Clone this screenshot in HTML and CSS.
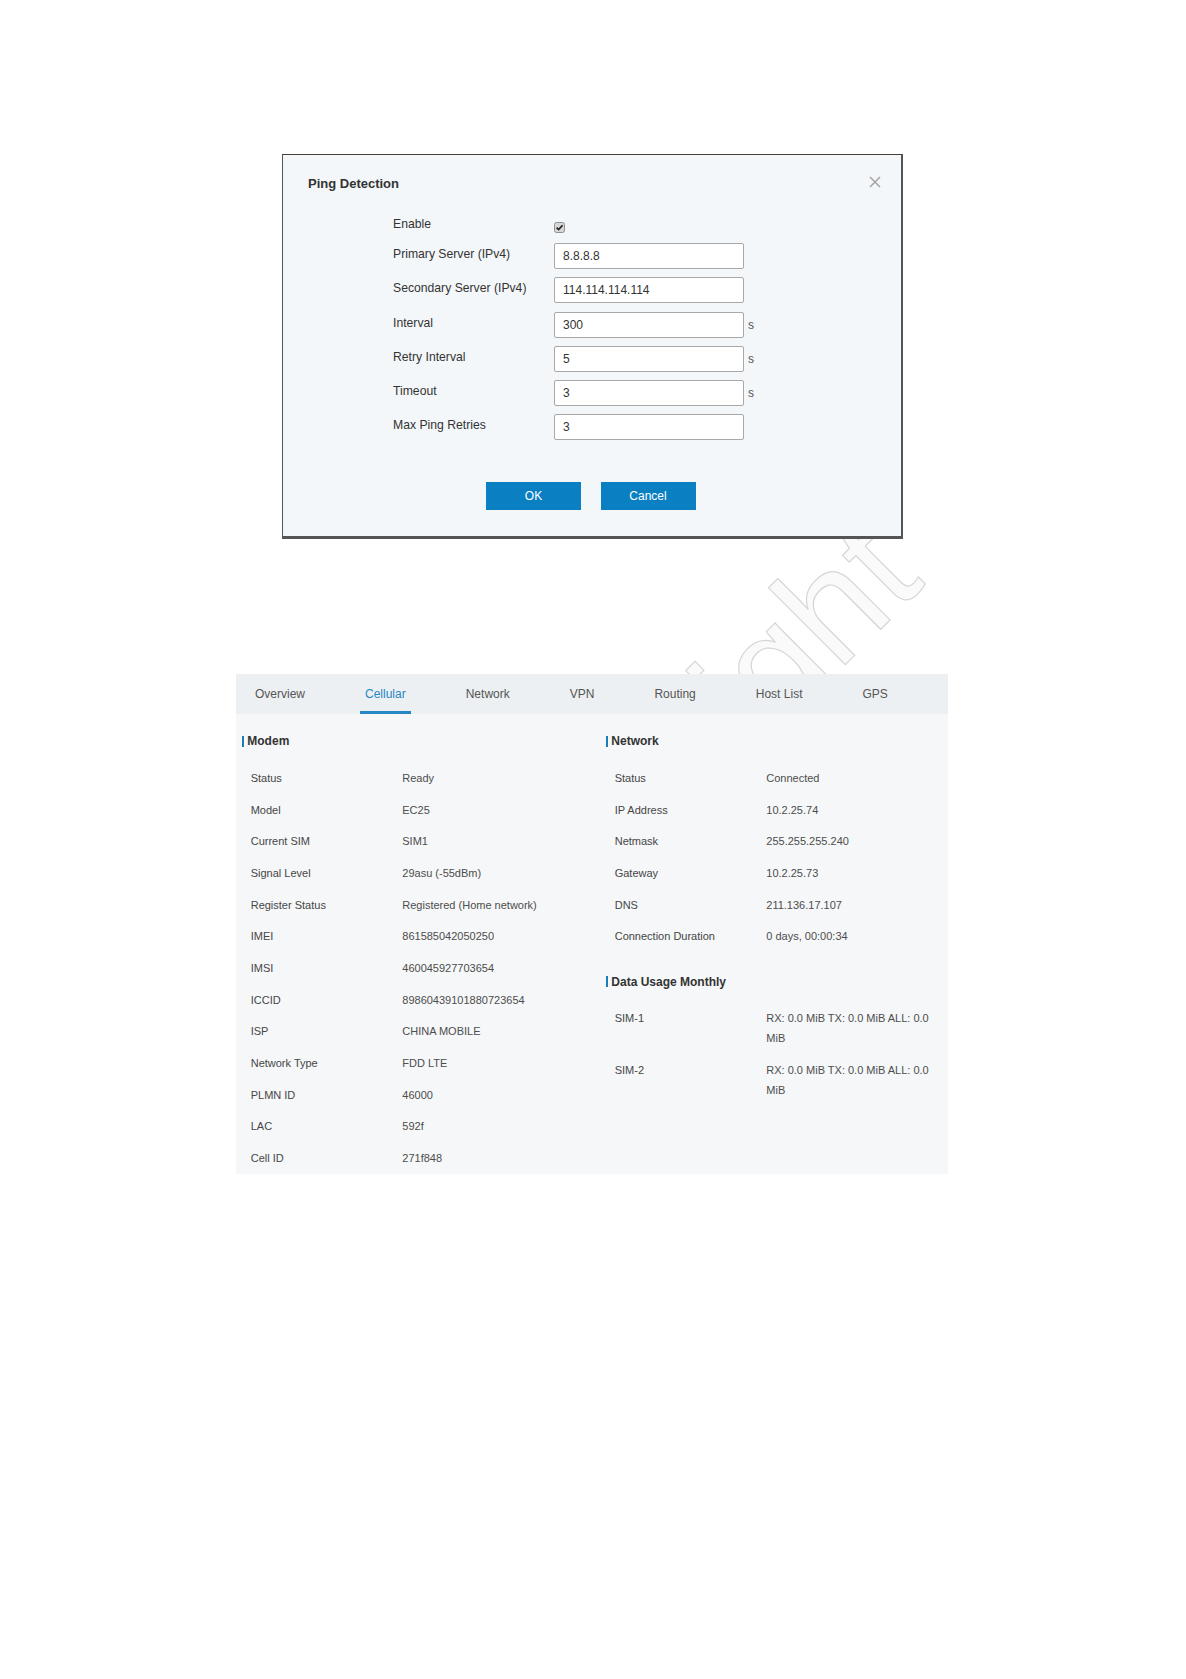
FILE: index.html
```html
<!DOCTYPE html>
<html>
<head>
    <title>Ping Detection - Cellular Status</title>
    <meta name="viewport" content="width=device-width, initial-scale=1.0">
    <link rel="stylesheet" href="styles.css">
</head>
<body>
<div class="page">
    <!-- faint watermark behind the screenshots -->
    <span class="watermark">Milesight</span>

    <!-- Ping Detection dialog -->
    <div class="dialog">
        <div class="dialog-head">
            <span class="dialog-title">Ping Detection</span>
            <svg class="close" width="12" height="12" viewBox="0 0 12 12">
                <path d="M1 1 L11 11 M11 1 L1 11" stroke="#a3a3a3" stroke-width="1.5" fill="none"/>
            </svg>
        </div>
        <div class="form">
            <div class="field">
                <label>Enable</label>
                <svg class="check" width="11" height="11" viewBox="0 0 11 11">
                    <rect x="0.5" y="0.5" width="10" height="10" rx="2" fill="#d6d6d6" stroke="#8f8f8f"/>
                    <path d="M2.6 5.6 L4.6 7.6 L8.6 3.2" stroke="#222" stroke-width="1.7" fill="none"/>
                </svg>
            </div>
            <div class="field">
                <label>Primary Server (IPv4)</label>
                <input type="text" value="8.8.8.8">
            </div>
            <div class="field">
                <label>Secondary Server (IPv4)</label>
                <input type="text" value="114.114.114.114">
            </div>
            <div class="field">
                <label>Interval</label>
                <input type="text" value="300">
                <span class="unit">s</span>
            </div>
            <div class="field">
                <label>Retry Interval</label>
                <input type="text" value="5">
                <span class="unit">s</span>
            </div>
            <div class="field">
                <label>Timeout</label>
                <input type="text" value="3">
                <span class="unit">s</span>
            </div>
            <div class="field">
                <label>Max Ping Retries</label>
                <input type="text" value="3">
            </div>
        </div>
        <div class="actions">
            <button>OK</button>
            <button>Cancel</button>
        </div>
    </div>

    <!-- Status > Cellular page -->
    <div class="status">
        <div class="tabs">
            <span class="tab">Overview</span>
            <span class="tab active">Cellular</span>
            <span class="tab">Network</span>
            <span class="tab">VPN</span>
            <span class="tab">Routing</span>
            <span class="tab">Host List</span>
            <span class="tab">GPS</span>
        </div>
        <div class="panel">
            <div class="col">
                <div class="section-title">Modem</div>
                <div class="row"><span class="k">Status</span><span class="v">Ready</span></div>
                <div class="row"><span class="k">Model</span><span class="v">EC25</span></div>
                <div class="row"><span class="k">Current SIM</span><span class="v">SIM1</span></div>
                <div class="row"><span class="k">Signal Level</span><span class="v">29asu (-55dBm)</span></div>
                <div class="row"><span class="k">Register Status</span><span class="v">Registered (Home network)</span></div>
                <div class="row"><span class="k">IMEI</span><span class="v">861585042050250</span></div>
                <div class="row"><span class="k">IMSI</span><span class="v">460045927703654</span></div>
                <div class="row"><span class="k">ICCID</span><span class="v">89860439101880723654</span></div>
                <div class="row"><span class="k">ISP</span><span class="v">CHINA MOBILE</span></div>
                <div class="row"><span class="k">Network Type</span><span class="v">FDD LTE</span></div>
                <div class="row"><span class="k">PLMN ID</span><span class="v">46000</span></div>
                <div class="row"><span class="k">LAC</span><span class="v">592f</span></div>
                <div class="row"><span class="k">Cell ID</span><span class="v">271f848</span></div>
            </div>
            <div class="col">
                <div class="section-title">Network</div>
                <div class="row"><span class="k">Status</span><span class="v">Connected</span></div>
                <div class="row"><span class="k">IP Address</span><span class="v">10.2.25.74</span></div>
                <div class="row"><span class="k">Netmask</span><span class="v">255.255.255.240</span></div>
                <div class="row"><span class="k">Gateway</span><span class="v">10.2.25.73</span></div>
                <div class="row"><span class="k">DNS</span><span class="v">211.136.17.107</span></div>
                <div class="row"><span class="k">Connection Duration</span><span class="v">0 days, 00:00:34</span></div>

                <div class="section-title usage">Data Usage Monthly</div>
                <div class="row"><span class="k">SIM-1</span><span class="v">RX: 0.0 MiB TX: 0.0 MiB ALL: 0.0 MiB</span></div>
                <div class="row"><span class="k">SIM-2</span><span class="v">RX: 0.0 MiB TX: 0.0 MiB ALL: 0.0 MiB</span></div>
            </div>
        </div>
    </div>
</div>
</body>
</html>
```

FILE: styles.css
```css
* {
    box-sizing: border-box;
}

body {
    margin: 0;
    background-color: #fff;
    font-family: "Liberation Sans", Arial, sans-serif;
    color: #333;
}

.page {
    position: relative;
    min-height: 1679px;
    padding-top: 154px;
    overflow: hidden;
}

/* Watermark sits under both screenshots */
.watermark {
    position: absolute;
    left: 508px;
    top: 875px;
    font-size: 150px;
    line-height: 1;
    white-space: nowrap;
    color: #fafafa;
    -webkit-text-stroke: 1.2px #d6d6d6;
    transform-origin: 0 127px;
    transform: rotate(-45deg);
    z-index: 0;
}

/* ---------- dialog ---------- */
.dialog {
    position: relative;
    z-index: 1;
    width: 621px;
    margin-left: 282px;
    padding: 21px 20px 26px 25px;
    background-color: #f4f7f9;
    border: 1px solid #555;
    border-top-color: #4a3f36;
    border-right-width: 2px;
    border-bottom-width: 3px;
}

.dialog-head {
    display: flex;
    justify-content: space-between;
    align-items: center;
    height: 16px;
}

.dialog-title {
    font-size: 13px;
    font-weight: bold;
    line-height: 16px;
    color: #333;
}

.close {
    margin-top: -4px;
}

.form {
    margin-top: 21px;
    padding-left: 85px;
}

.field {
    display: flex;
    align-items: flex-start;
    margin-bottom: 8.2px;
}

.field:last-child {
    margin-bottom: 0;
}

.field label {
    width: 161px;
    font-size: 12.2px;
    line-height: 22px;
    color: #333;
}

.field input {
    width: 190px;
    height: 26px;
    margin: 0;
    padding: 0 8px;
    border: 1px solid #a8a8a8;
    border-radius: 2px;
    background-color: #fff;
    font-family: "Liberation Sans", Arial, sans-serif;
    font-size: 12px;
    color: #333;
}

.check {
    margin-top: 9px;
}

.unit {
    margin-left: 4px;
    font-size: 12px;
    line-height: 26px;
    color: #555;
}

.actions {
    display: flex;
    gap: 19.5px;
    margin-top: 41.8px;
    padding-left: 178px;
}

.actions button {
    width: 95px;
    height: 28px;
    border: 0;
    border-radius: 0;
    background-color: #0a80c2;
    color: #fff;
    font-family: "Liberation Sans", Arial, sans-serif;
    font-size: 12px;
}

/* ---------- status page ---------- */
.status {
    position: relative;
    z-index: 1;
    width: 712px;
    margin: 135px 0 0 236px;
}

.tabs {
    display: flex;
    gap: 50px;
    height: 40px;
    padding-left: 14px;
    background-color: #edf0f2;
}

.tab {
    display: flex;
    align-items: center;
    padding: 0 5px;
    font-size: 12px;
    color: #555;
}

.tab.active {
    padding-top: 3px;
    border-bottom: 3px solid #2587c4;
    color: #2587c4;
}

.panel {
    display: grid;
    grid-template-columns: 364px 1fr;
    padding: 19.5px 0 0 6px;
    background-color: #f5f7f8;
    font-size: 11px;
}

.section-title {
    display: flex;
    align-items: center;
    margin-bottom: 12.6px;
    font-size: 12px;
    font-weight: bold;
    line-height: 16px;
    color: #333;
}

.section-title::before {
    content: "";
    width: 2px;
    height: 11px;
    margin-right: 3.3px;
    background-color: #1b7dbb;
}

.section-title.usage {
    margin-top: 21.8px;
}

.row {
    display: flex;
    padding: 5.85px 0 5.85px 8.7px;
    line-height: 20px;
}

.row .k {
    width: 151.6px;
    flex-shrink: 0;
    color: #464646;
}

.row .v {
    width: 170px;
    color: #4d4d4d;
}
```
